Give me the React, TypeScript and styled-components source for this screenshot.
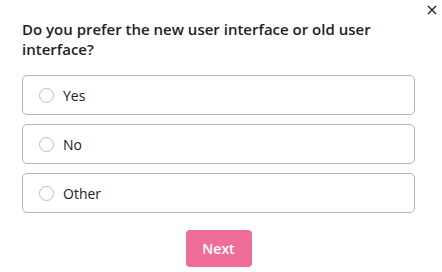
import React, { useState } from "react";
import styled, { createGlobalStyle } from "styled-components";

const GlobalStyle = createGlobalStyle`
  html, body {
    margin: 0;
    padding: 0;
    background: #ffffff;
  }
  body {
    font-family: "Open Sans", "Liberation Sans", sans-serif;
  }
`;

const Dialog = styled.div`
  position: relative;
  width: 442px;
  height: 272px;
  box-sizing: border-box;
  padding: 20px 27px 0 22px;
  display: flex;
  flex-direction: column;
  background: #ffffff;
`;

const CloseButton = styled.button`
  position: absolute;
  top: 4px;
  right: 4px;
  width: 12px;
  height: 12px;
  padding: 0;
  border: none;
  background: transparent;
  display: flex;
  align-items: center;
  justify-content: center;
  cursor: pointer;
`;

const Question = styled.h2`
  margin: 0 0 16px 0;
  font-size: 15px;
  font-weight: 600;
  line-height: 19.5px;
  color: #1f1f1f;
`;

const Options = styled.div`
  display: flex;
  flex-direction: column;
  gap: 9px;
`;

const OptionRow = styled.label`
  height: 40px;
  box-sizing: border-box;
  border: 1px solid #b4b4b4;
  border-radius: 5px;
  padding-left: 16px;
  display: flex;
  align-items: center;
  gap: 9px;
  cursor: pointer;
`;

const Radio = styled.span<{ $checked: boolean }>`
  width: 15px;
  height: 15px;
  box-sizing: border-box;
  border-radius: 50%;
  border: 1px solid #bdbdbd;
  background: ${(p) => (p.$checked ? "#ee6e98" : "#ffffff")};
`;

const OptionLabel = styled.span`
  font-size: 14px;
  color: #222222;
  line-height: 19px;
`;

const Footer = styled.div`
  display: flex;
  justify-content: center;
  margin-top: 17px;
`;

const NextButton = styled.button`
  width: 66px;
  height: 37px;
  border: none;
  border-radius: 4px;
  background: #ee6e98;
  color: #ffffff;
  font-family: "Open Sans", "Liberation Sans", sans-serif;
  font-size: 14px;
  font-weight: 600;
  cursor: pointer;
`;

const options = ["Yes", "No", "Other"];

export default function App() {
  const [selected, setSelected] = useState<string | null>(null);

  return (
    <>
      <GlobalStyle />
      <Dialog>
        <CloseButton aria-label="Close">
          <svg width="10" height="10" viewBox="0 0 10 10">
            <path d="M1 1 L9 9 M9 1 L1 9" stroke="#222" strokeWidth="1.4" />
          </svg>
        </CloseButton>
        <Question>Do you prefer the new user interface or old user interface?</Question>
        <Options>
          {options.map((opt) => (
            <OptionRow key={opt} onClick={() => setSelected(opt)}>
              <Radio $checked={selected === opt} />
              <OptionLabel>{opt}</OptionLabel>
            </OptionRow>
          ))}
        </Options>
        <Footer>
          <NextButton>Next</NextButton>
        </Footer>
      </Dialog>
    </>
  );
}
